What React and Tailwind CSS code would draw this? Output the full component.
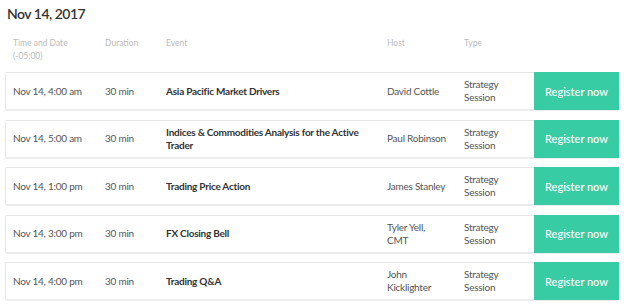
import React from 'react';

const sessions = [
  { time: 'Nov 14, 4:00 am', event: 'Asia Pacific Market Drivers', host: 'David Cottle' },
  { time: 'Nov 14, 5:00 am', event: 'Indices & Commodities Analysis for the Active Trader', host: 'Paul Robinson' },
  { time: 'Nov 14, 1:00 pm', event: 'Trading Price Action', host: 'James Stanley' },
  { time: 'Nov 14, 3:00 pm', event: 'FX Closing Bell', host: 'Tyler Yell, CMT' },
  { time: 'Nov 14, 4:00 pm', event: 'Trading Q&A', host: 'John Kicklighter' },
];

export default function App() {
  return (
    <div className="w-[624px] h-[308px] bg-white overflow-hidden px-[5px] font-['Lato','Liberation_Sans',sans-serif]">
      <h2 className="pt-[5px] pl-[2px] text-[14px] leading-[18px] tracking-[-0.5px] font-semibold text-[#333]">Nov 14, 2017</h2>

      {/* Column headings */}
      <div className="flex mt-[14px] h-[35px] text-[8.5px] leading-[12.5px] text-[#bbb]">
        <div className="w-[100px] pl-[8px]">
          Time and Date<br />(-05:00)
        </div>
        <div className="w-[61px]">Duration</div>
        <div className="w-[221px]">Event</div>
        <div className="w-[77px]">Host</div>
        <div>Type</div>
      </div>

      <div className="flex flex-col gap-[8.5px]">
        {sessions.map((s) => (
          <div
            key={s.time}
            className="flex items-center h-[39px] border border-[#e6e6e6] border-b-2 border-b-[#ececec] rounded-[2px] text-[10px] leading-[13px] tracking-[-0.25px] text-[#555]"
          >
            <div className="w-[99px] pl-[7px]">{s.time}</div>
            <div className="w-[61px]">30 min</div>
            <div className="w-[221px] pr-[8px] font-bold text-[#333]">{s.event}</div>
            <div className="w-[77px] pr-[16px]">{s.host}</div>
            <div className="w-[70px]">Strategy<br />Session</div>
            <button className="ml-auto self-stretch -my-px -mr-px w-[85px] bg-[#38cca5] text-white text-[11px] tracking-normal font-medium">
              Register now
            </button>
          </div>
        ))}
      </div>
    </div>
  );
}
